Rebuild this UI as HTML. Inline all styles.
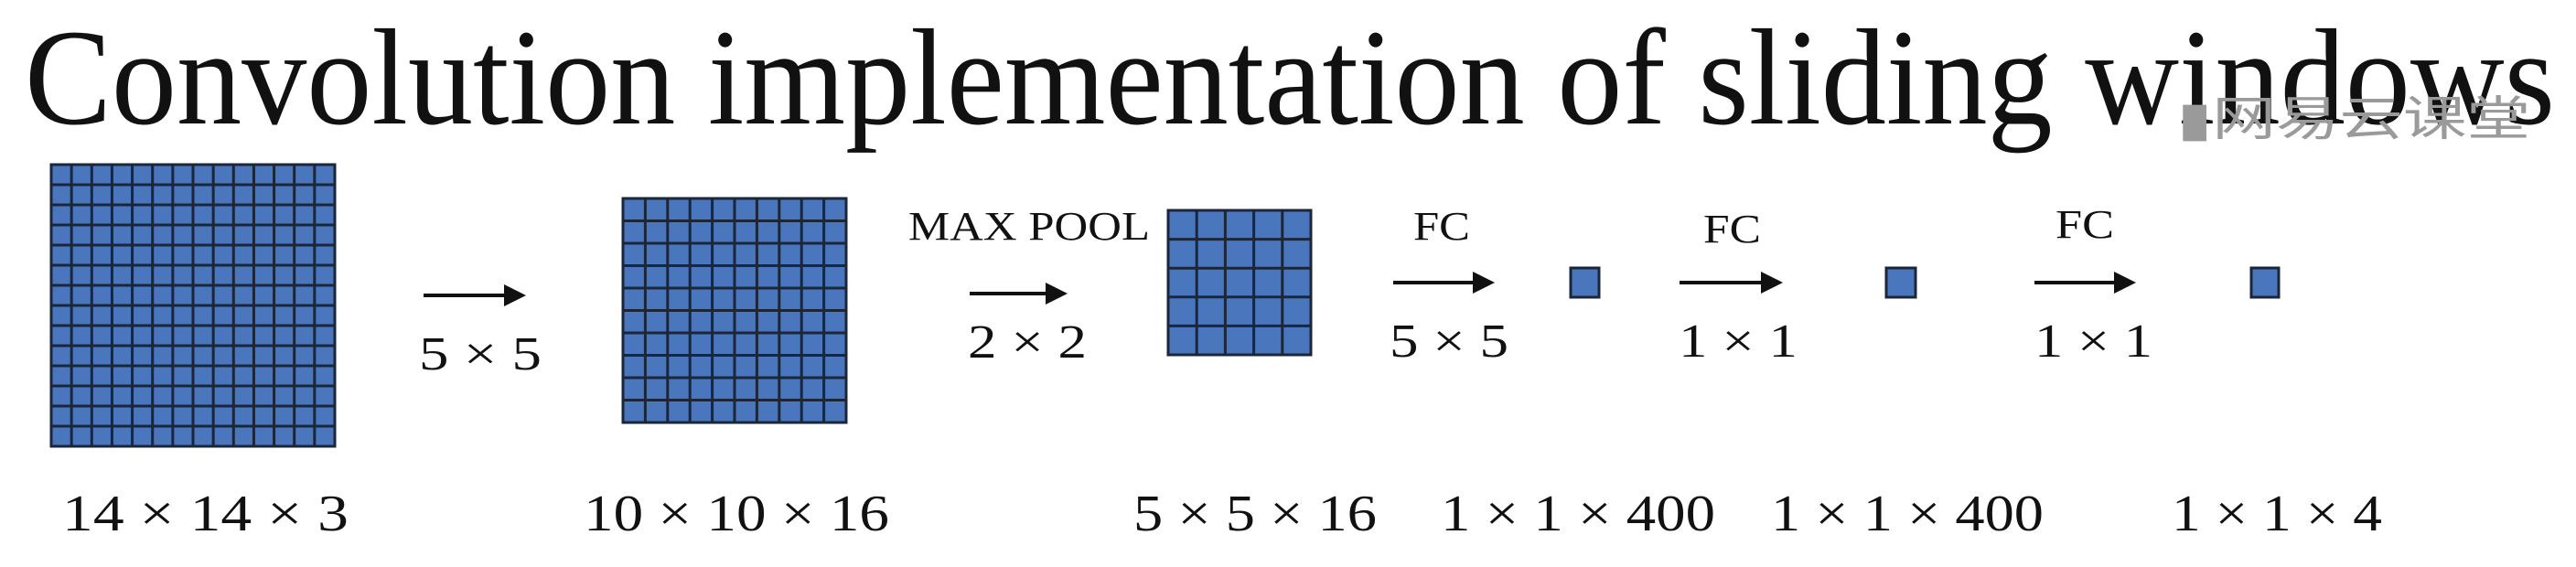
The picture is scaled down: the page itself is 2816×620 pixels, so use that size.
<!DOCTYPE html>
<html><head><meta charset="utf-8"><style>
html,body{margin:0;padding:0;background:#fff;width:2816px;height:620px;overflow:hidden}
svg{display:block}
text{font-family:"Liberation Serif",serif;fill:#111}
</style></head><body>
<svg width="2816" height="620" viewBox="0 0 2816 620" xmlns="http://www.w3.org/2000/svg">
<defs>
<marker id="ah" markerWidth="10" markerHeight="10" refX="0" refY="5" orient="auto" markerUnits="userSpaceOnUse"></marker>
</defs>
<text x="27" y="135" font-size="150" textLength="2766" lengthAdjust="spacingAndGlyphs">Convolution implementation of sliding windows</text>
<text x="2380" y="148" font-size="52" fill="#999" style="fill:#9a9a9a;font-family:'Noto Sans CJK SC',sans-serif" textLength="386" lengthAdjust="spacingAndGlyphs">▮网易云课堂</text>

<g stroke="#1b2638" stroke-width="3" fill="#4a76be">
<!-- grid 1 14x14 -->
<rect x="56" y="180" width="310" height="308"/>
<!-- grid 2 10x10 -->
<rect x="681" y="217" width="244" height="245"/>
<!-- grid 3 5x5 -->
<rect x="1277" y="230" width="156" height="158"/>
<rect x="1717" y="293" width="31" height="32"/>
<rect x="2062" y="293" width="32" height="32"/>
<rect x="2461" y="293" width="30" height="32"/>
</g>
<g stroke="#1b2638" stroke-width="3" id="lines"></g>

<g stroke="#111" stroke-width="4">
<line x1="463" y1="323" x2="555" y2="323"/>
<line x1="1060" y1="321" x2="1147" y2="321"/>
<line x1="1523" y1="309" x2="1614" y2="309"/>
<line x1="1836" y1="309" x2="1929" y2="309"/>
<line x1="2224" y1="309" x2="2315" y2="309"/>
</g>
<g fill="#111">
<polygon points="575,323 551,311 551,335"/>
<polygon points="1167,321 1143,309 1143,333"/>
<polygon points="1634,309 1610,297 1610,321"/>
<polygon points="1949,309 1925,297 1925,321"/>
<polygon points="2335,309 2311,297 2311,321"/>
</g>

<g font-size="52">
<text x="458" y="404" textLength="134" lengthAdjust="spacingAndGlyphs">5 × 5</text>
<text x="1058" y="391" textLength="130" lengthAdjust="spacingAndGlyphs">2 × 2</text>
<text x="1519" y="390" textLength="130" lengthAdjust="spacingAndGlyphs">5 × 5</text>
<text x="1835" y="390" textLength="130" lengthAdjust="spacingAndGlyphs">1 × 1</text>
<text x="2224" y="390" textLength="129" lengthAdjust="spacingAndGlyphs">1 × 1</text>
</g>
<g font-size="44">
<text x="993" y="262" textLength="264" lengthAdjust="spacingAndGlyphs">MAX POOL</text>
<text x="1545" y="262" textLength="62" lengthAdjust="spacingAndGlyphs">FC</text>
<text x="1862" y="265" textLength="63" lengthAdjust="spacingAndGlyphs">FC</text>
<text x="2247" y="260" textLength="64" lengthAdjust="spacingAndGlyphs">FC</text>
</g>
<g font-size="56">
<text x="68" y="580" textLength="313" lengthAdjust="spacingAndGlyphs">14 × 14  × 3</text>
<text x="638" y="580" textLength="334" lengthAdjust="spacingAndGlyphs">10 × 10 × 16</text>
<text x="1239" y="580" textLength="266" lengthAdjust="spacingAndGlyphs">5 × 5 × 16</text>
<text x="1575" y="580" textLength="300" lengthAdjust="spacingAndGlyphs">1 × 1 × 400</text>
<text x="1936" y="580" textLength="298" lengthAdjust="spacingAndGlyphs">1 × 1 × 400</text>
<text x="2374" y="580" textLength="230" lengthAdjust="spacingAndGlyphs">1 × 1 × 4</text>
</g>
</svg>
<script>
(function(){
var g=document.getElementById('lines'),ns='http://www.w3.org/2000/svg';
function grid(x,y,w,h,n){
 for(var i=1;i<n;i++){
  var a=document.createElementNS(ns,'line');
  a.setAttribute('x1',x+w*i/n);a.setAttribute('x2',x+w*i/n);a.setAttribute('y1',y);a.setAttribute('y2',y+h);g.appendChild(a);
  var b=document.createElementNS(ns,'line');
  b.setAttribute('y1',y+h*i/n);b.setAttribute('y2',y+h*i/n);b.setAttribute('x1',x);b.setAttribute('x2',x+w);g.appendChild(b);
 }
}
grid(56,180,310,308,14);grid(681,217,244,245,10);grid(1277,230,156,158,5);
})();
</script>
</body></html>
